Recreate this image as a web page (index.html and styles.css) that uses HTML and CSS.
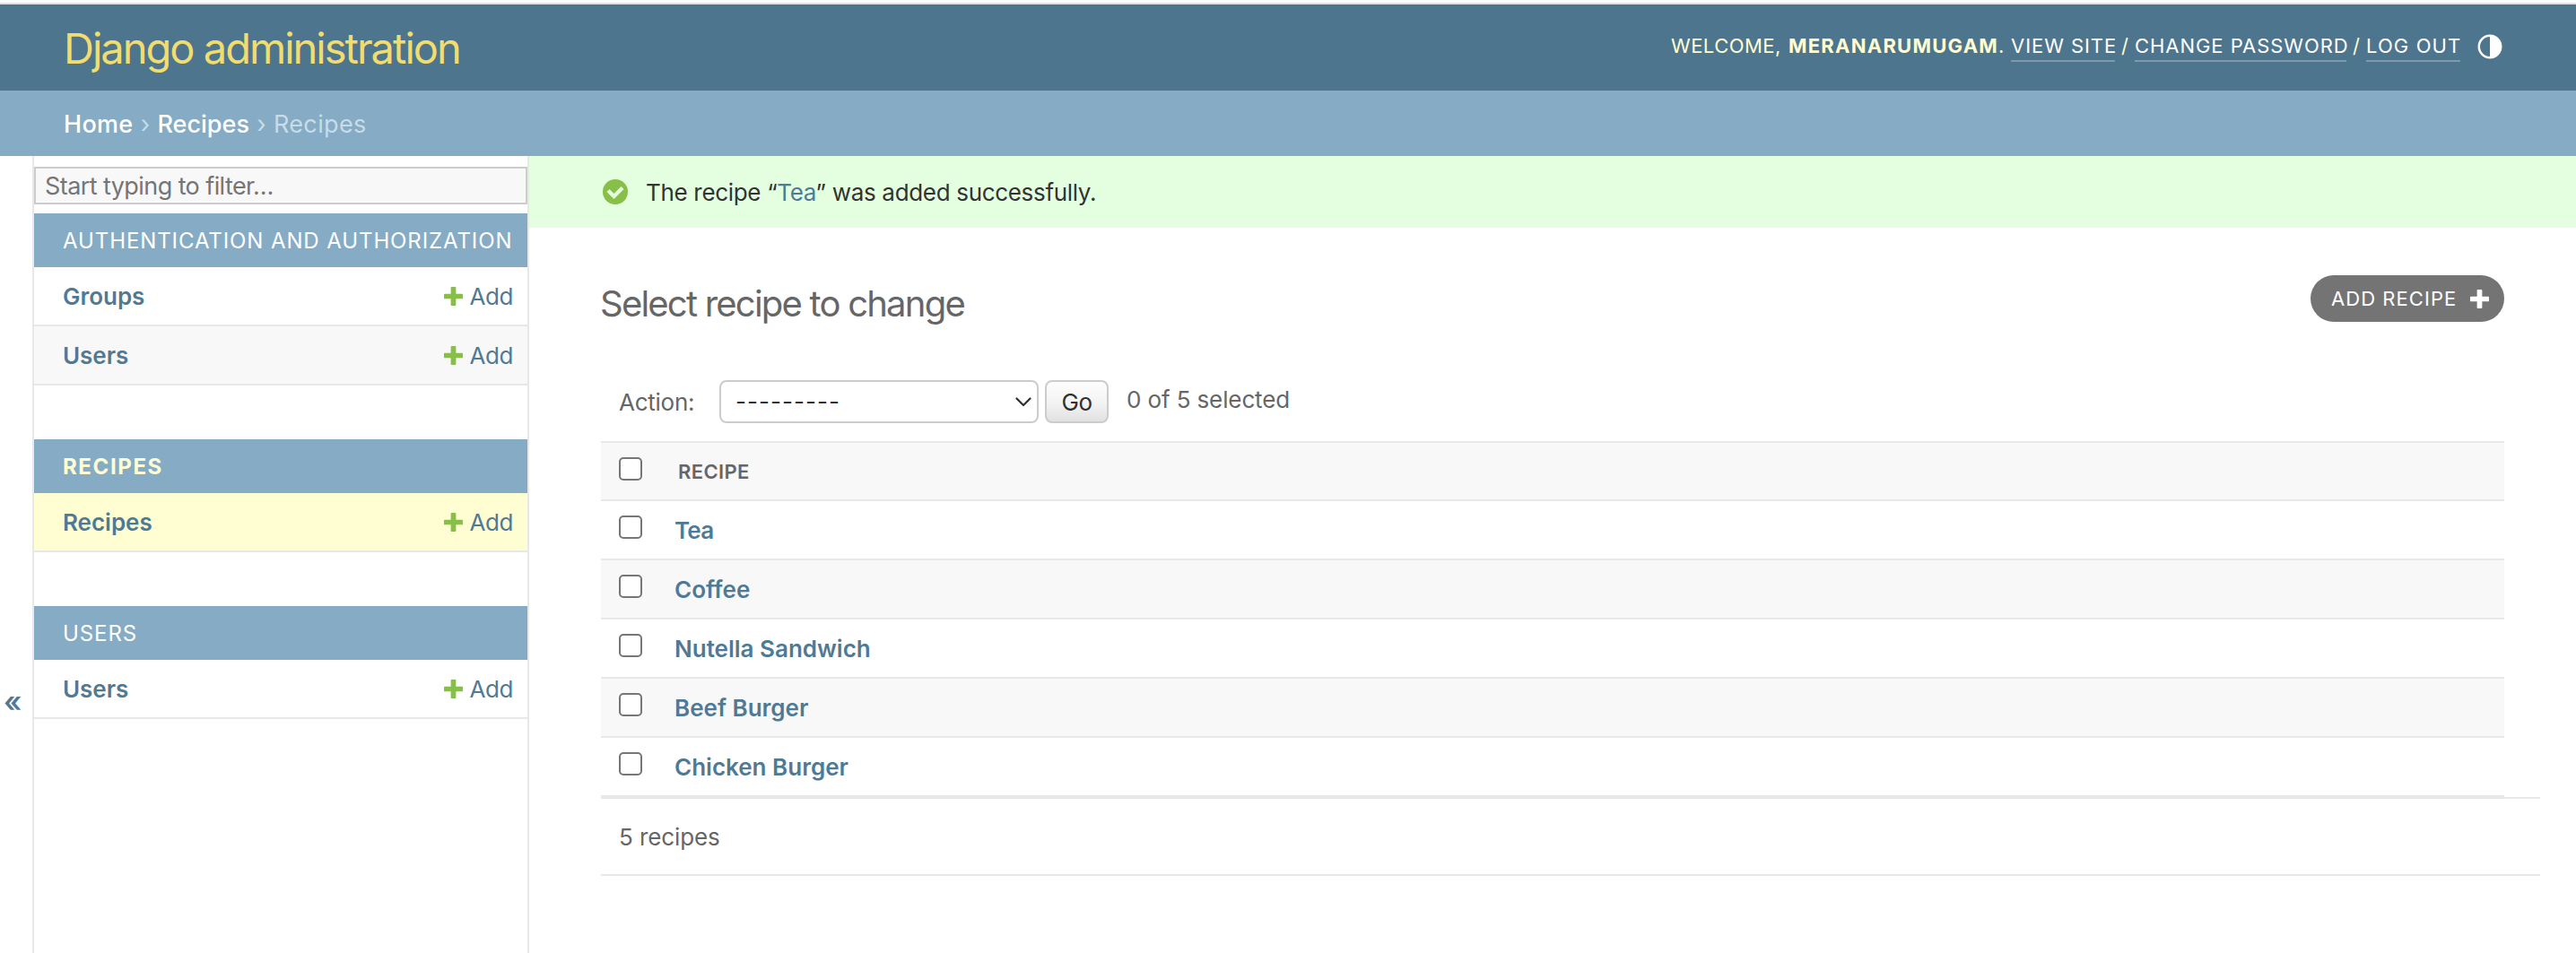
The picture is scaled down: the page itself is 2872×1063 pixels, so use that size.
FILE: index.html
```html
<!DOCTYPE html>
<html lang="en">
<head>
<meta charset="utf-8">
<title>Select recipe to change | Django site admin</title>
<link rel="stylesheet" href="styles.css">
</head>
<body>
<svg class="sprite" aria-hidden="true">
  <symbol id="plus" viewBox="0 0 22 22"><path d="M9 0h4q1 0 1 1v7h7q1 0 1 1v4q0 1-1 1h-7v7q0 1-1 1H9q-1 0-1-1v-7H1q-1 0-1-1V9q0-1 1-1h7V1q0-1 1-1z"/></symbol>
</svg>
<div class="page">
  <header class="header">
    <h1 class="site-name">Django administration</h1>
    <div class="user-tools">
      <span class="welcome">WELCOME,</span>
      <span class="user-name"><strong>MERANARUMUGAM</strong>.</span>
      <a class="tool view-site">VIEW SITE</a><span class="slash">/</span>
      <a class="tool change-password">CHANGE PASSWORD</a><span class="slash">/</span>
      <a class="tool log-out">LOG OUT</a>
      <svg class="theme-icon" viewBox="0 0 28 28"><circle cx="14" cy="14" r="12.200" fill="none" stroke="#fff" stroke-width="2.500"/><path d="M14 1a13 13 0 0 1 0 26z" fill="#fff"/></svg>
    </div>
  </header>
  <nav class="breadcrumbs">
    <a class="crumb crumb-home">Home</a><span class="sep">›</span><a class="crumb">Recipes</a><span class="sep">›</span><span class="current">Recipes</span>
  </nav>
  <div class="main">
    <button class="toggle">«</button>
    <nav class="sidebar">
      <input class="filter" type="search" placeholder="Start typing to filter…">
      <section class="module">
        <h2 class="caption">AUTHENTICATION AND AUTHORIZATION</h2>
        <div class="model"><a class="model-name">Groups</a><a class="add"><svg class="add-icon"><use href="#plus"/></svg>Add</a></div>
        <div class="model alt"><a class="model-name">Users</a><a class="add"><svg class="add-icon"><use href="#plus"/></svg>Add</a></div>
      </section>
      <section class="module">
        <h2 class="caption current-app">RECIPES</h2>
        <div class="model current-model"><a class="model-name">Recipes</a><a class="add"><svg class="add-icon"><use href="#plus"/></svg>Add</a></div>
      </section>
      <section class="module">
        <h2 class="caption">USERS</h2>
        <div class="model"><a class="model-name">Users</a><a class="add"><svg class="add-icon"><use href="#plus"/></svg>Add</a></div>
      </section>
    </nav>
    <main class="content">
      <div class="message">
        <svg class="success-icon" viewBox="0 0 28 28"><circle cx="14" cy="14" r="14" fill="#87bf48"/><path d="M4.500 14l3-3 5 5 8-8 3 3L12.500 22z" fill="#e3ffdf"/></svg>
        <p class="message-text">The recipe “<a class="link">Tea</a>” was added successfully.</p>
      </div>
      <div class="title-row">
        <h2 class="title">Select recipe to change</h2>
        <a class="add-button">ADD RECIPE<svg class="button-icon"><use href="#plus"/></svg></a>
      </div>
      <div class="actions">
        <label class="action-label">Action:</label>
        <div class="select"><span class="dashes">---------</span><svg class="chevron" viewBox="0 0 18 11"><path d="M1.500 1.500l7.500 7.500 7.500-7.500" fill="none" stroke="#303030" stroke-width="2.200" stroke-linecap="round" stroke-linejoin="round"/></svg></div>
        <button class="go">Go</button>
        <span class="counter">0 of 5 selected</span>
      </div>
      <div class="results">
        <div class="row head"><input class="check" type="checkbox"><span class="column">RECIPE</span></div>
        <div class="row"><input class="check" type="checkbox"><a class="recipe tea">Tea</a></div>
        <div class="row even"><input class="check" type="checkbox"><a class="recipe">Coffee</a></div>
        <div class="row"><input class="check" type="checkbox"><a class="recipe">Nutella Sandwich</a></div>
        <div class="row even"><input class="check" type="checkbox"><a class="recipe">Beef Burger</a></div>
        <div class="row"><input class="check" type="checkbox"><a class="recipe">Chicken Burger</a></div>
      </div>
      <p class="paginator">5 recipes</p>
    </main>
  </div>
</div>
</body>
</html>
```
FILE: styles.css
```css
* { box-sizing: border-box; }
body {
  margin: 0;
  background: #fff;
  color: #666;
  font: 26px/32px Inter, "Liberation Sans", sans-serif;
}
h1, h2, p { margin: 0; font-weight: 400; }
.sprite { display: none; }
.page { display: flex; flex-direction: column; height: 1063px; overflow: hidden; padding-top: 3px; }

/* Header */
.header {
  display: flex;
  justify-content: space-between;
  height: 98px;
  padding: 0 82px 0 71px;
  border-top: 2px solid #e0e0e0;
  background: #4e758e;
  color: #fefed2;
}
.site-name { padding-top: 1px; font-size: 47px; line-height: 96px; letter-spacing: -1.99px; color: #f1dc70; }
.user-tools { display: flex; height: 92px; align-items: center; font-size: 22px; white-space: nowrap; }
.welcome { width: 131px; letter-spacing: .47px; }
.user-name { width: 248px; }
.user-name strong { letter-spacing: 1.25px; }
.tool { height: 31px; line-height: 27px; border-bottom: 2px solid #8198a8; color: #fff; letter-spacing: .95px; margin-top: 4px; }
.view-site { width: 116px; }
.change-password { width: 236px; }
.log-out { width: 105px; letter-spacing: 1.1px; }
.slash { width: 22px; text-align: center; }
.theme-icon { width: 28px; height: 28px; margin: 2px 0 0 19px; }

.breadcrumbs {
  display: flex;
  height: 73px;
  padding: 1px 0 0 71px;
  background: #85abc5;
  color: #c7dce9;
  font-size: 27px;
  line-height: 73px;
}
.crumb { color: #fff; font-weight: 500; }
.crumb-home { letter-spacing: .3px; }
.sep { width: 27px; text-align: center; }
.current { letter-spacing: .35px; }

/* Sidebar */
.main { display: flex; flex: 1; }
.toggle {
  display: flex;
  align-items: flex-start;
  width: 36px;
  height: 889px;
  margin: 0;
  padding: 593px 0 0 4px;
  border: 0;
  background: none;
  color: #4f7a96;
  font: 600 32px/1 Inter, sans-serif;
}
.sidebar { width: 554px; border: solid #e8e8e8; border-width: 0 2px; padding-top: 12px; }
.filter {
  display: block;
  width: 100%;
  height: 42px;
  margin: 0 0 10px;
  padding: 0 10px 0;
  border: 2px solid #ccc;
  border-radius: 0;
  background: #f8f8f8;
  font: 27px Inter, sans-serif;
  letter-spacing: -.58px;
  appearance: none;
  outline: 0;
}
.filter::placeholder { color: #757575; opacity: 1; }
.module { margin-bottom: 60px; }
.caption { height: 60px; padding: 1px 0 0 32px; background: #85abc5; color: #fff; font-size: 24px; line-height: 60px; letter-spacing: .9px; white-space: nowrap; }
.current-app { color: #fefed2; font-weight: 700; letter-spacing: 1.6px; }
.model { display: flex; justify-content: space-between; height: 66px; padding: 1px 16px 0 32px; border-bottom: 2px solid #e8e8e8; line-height: 64px; color: #4f7a96; }
.alt { background: #f8f8f8; }
.current-model { background: #fefed2; }
.model-name { font-weight: 600; letter-spacing: -.02px; }
.add { display: flex; letter-spacing: -.43px; }
.add-icon { width: 21px; height: 21px; margin: 21px 8px 0 0; fill: #87bf48; }

/* Content */
.content { flex: 1; min-width: 0; }
.message { display: flex; align-items: center; height: 80px; padding-left: 82px; background: #e3ffdf; color: #333; }
.success-icon { width: 28px; height: 28px; }
.message-text { margin-left: 20px; letter-spacing: -.32px; padding-top: 1px; }
.link { color: #4f7a96; }
.title-row { display: flex; justify-content: space-between; padding: 53px 80px 0 79px; }
.title { padding-top: 7px; font-size: 40px; line-height: 50px; letter-spacing: -1.78px; }
.add-button { display: flex; align-items: center; width: 216px; height: 52px; padding-left: 23px; border-radius: 26px; background: #747474; color: #fff; font-size: 22px; letter-spacing: 1.05px; }
.button-icon { width: 21px; height: 21px; margin-left: 15px; fill: #fff; }
.actions { display: flex; align-items: center; height: 48px; margin-top: 60px; padding-left: 100px; }
.action-label { width: 112px; padding-top: 2px; letter-spacing: -.26px; }
.select { display: flex; align-items: center; justify-content: space-between; width: 356px; height: 48px; padding: 0 6px 0 16px; border: 2px solid #ccc; border-radius: 8px; color: #303030; }
.dashes { letter-spacing: 1.04px; }
.chevron { width: 18px; height: 11px; }
.go { width: 71px; height: 48px; margin: 0 20px 0 7px; padding: 1px 0 0; border: 2px solid #ccc; border-radius: 8px; background: linear-gradient(#fdfdfd, #f3f3f3 55%, #e1e1e1); color: #303030; font: 26px Inter, sans-serif; letter-spacing: -.4px; }
.counter { margin-top: -5px; letter-spacing: -.12px; }
.results { width: 2122px; margin: 20px 0 0 80px; border-top: 2px solid #e8e8e8; }
.row { display: flex; height: 66px; padding: 16px 0 0 20px; border-bottom: 2px solid #e8e8e8; }
.head { height: 65px; background: #f8f8f8; font-size: 22px; font-weight: 600; }
.even { background: #f8f8f8; }
.check { flex: none; width: 26px; height: 26px; margin: 0 36px 0 0; border: 2px solid #767676; border-radius: 5px; background: #fff; appearance: none; }
.column { padding-left: 4px; line-height: 32px; letter-spacing: .37px; }
.recipe { line-height: 34px; color: #4f7a96; font-weight: 600; }
.tea { letter-spacing: -.8px; }
.paginator { width: 2162px; height: 88px; margin-left: 80px; padding: 0 0 0 20px; border: solid #e8e8e8; border-width: 2px 0; line-height: 86px; letter-spacing: -.1px; }
```
